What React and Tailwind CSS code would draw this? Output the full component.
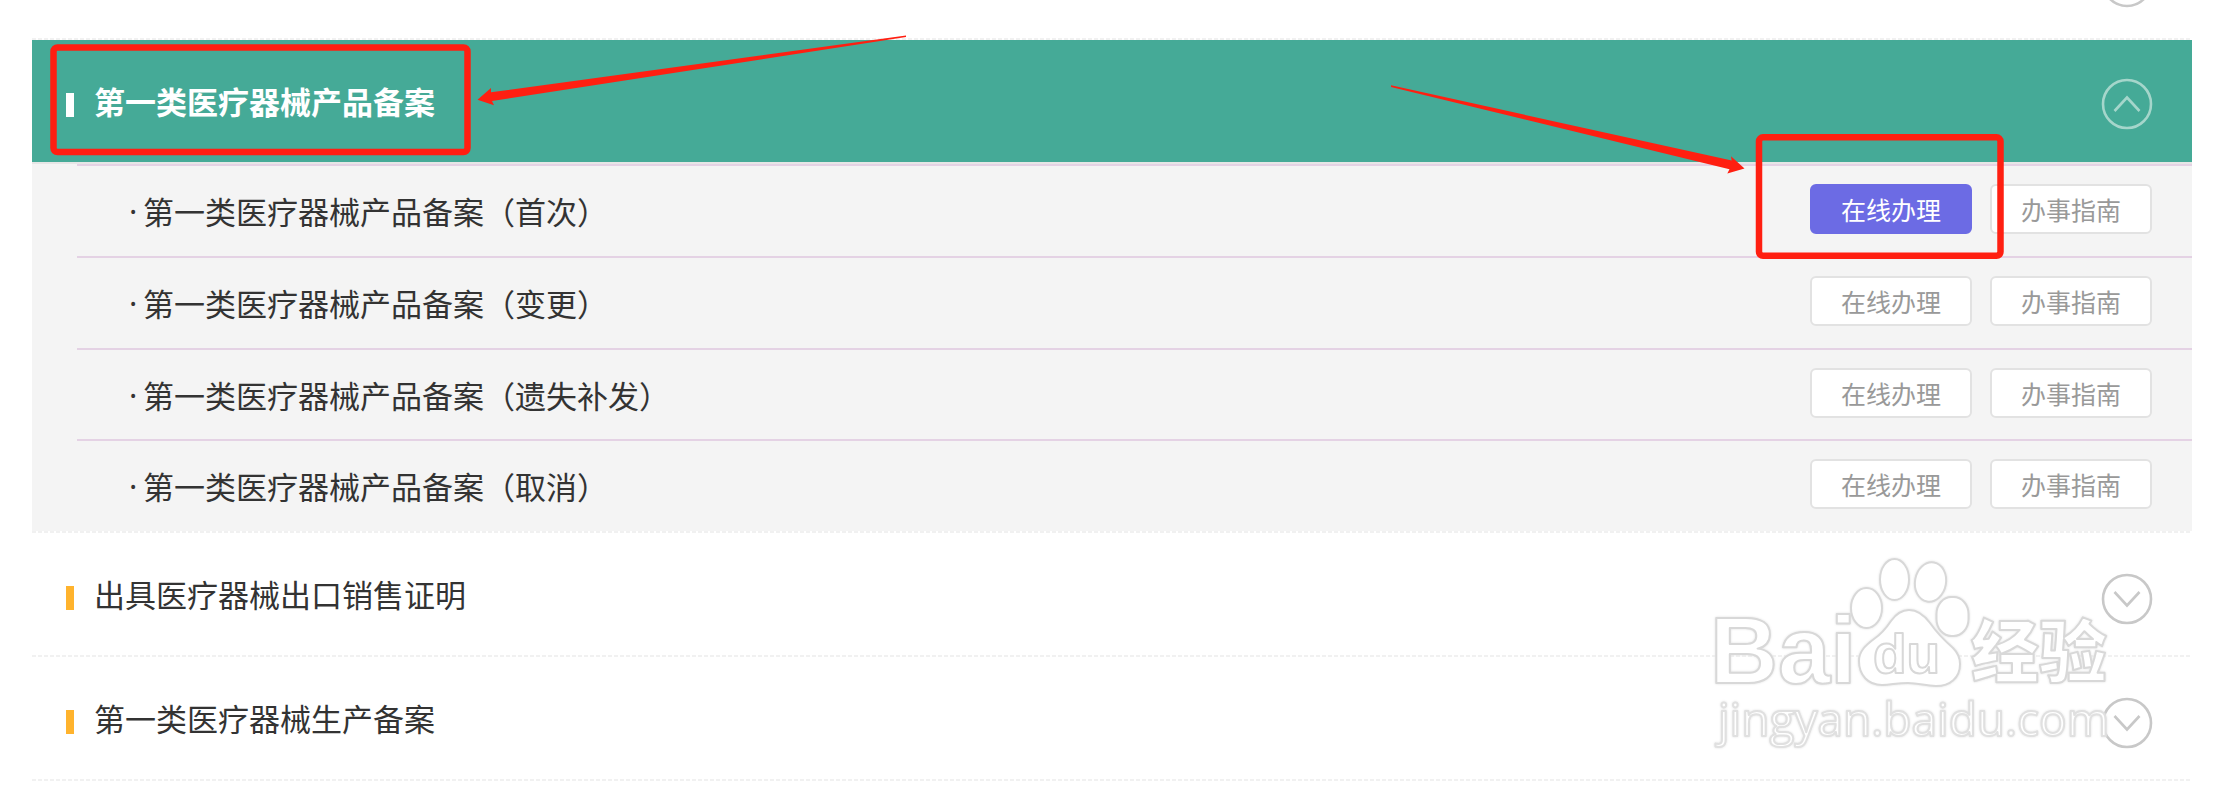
import { useState } from "react";

const fontStack = "font-['Noto_Sans_CJK_SC','Noto_Sans',sans-serif]";

const productos = [
  { id: 1, nombre: "第一类医疗器械产品备案（首次）", activo: true },
  { id: 2, nombre: "第一类医疗器械产品备案（变更）", activo: false },
  { id: 3, nombre: "第一类医疗器械产品备案（遗失补发）", activo: false },
  { id: 4, nombre: "第一类医疗器械产品备案（取消）", activo: false },
];

function DashedLine() {
  return (
    <div className="h-0.5 bg-[repeating-linear-gradient(90deg,#f1f1f1_0_4px,#ffffff_4px_6px)]" />
  );
}

function CircleArrow({ up }) {
  return (
    <svg
      viewBox="0 0 52 52"
      className={up ? "size-[52px] shrink-0 mt-1.5 text-[#a5d6cb]" : "size-[52px] shrink-0 mt-2.5 text-[#c8c8c8]"}
      fill="none"
      stroke="currentColor"
      strokeWidth="2.6"
    >
      <circle cx="26" cy="26" r="24" />
      {up ? <path d="M13.5 33 26 19.5 38.5 33" /> : <path d="M13.5 19 26 32.5 38.5 19" />}
    </svg>
  );
}

function Header({ title, open, onClick }) {
  return (
    <button
      type="button"
      onClick={onClick}
      aria-expanded={open}
      className={
        open
          ? "flex w-full h-[122px] items-center pl-[34px] pr-[39px] bg-[#45aa97] text-white font-bold cursor-pointer"
          : "flex w-full h-[122px] items-center pl-[34px] pr-[39px] text-[#333333] cursor-pointer"
      }
    >
      <span className={open ? "w-2 h-6 mt-2 bg-white" : "w-2 h-6 mt-2 bg-[#ffb32d]"} />
      <span className="ml-5 flex-1 text-left text-[31px] leading-[44px]">{title}</span>
      <CircleArrow up={open} />
    </button>
  );
}

function ActionButton({ children, primary }) {
  return (
    <button
      type="button"
      className={
        primary
          ? "w-[162px] h-[50px] rounded-md bg-[#6c6be4] text-white text-[25px] leading-[46px] border-2 border-[#6c6be4] cursor-pointer"
          : "w-[162px] h-[50px] rounded-md bg-white text-[#999999] text-[25px] leading-[46px] border-2 border-[#e2e2e2] cursor-pointer"
      }
    >
      {children}
    </button>
  );
}

// marcas rojas de la izquierda
function LeftMarks() {
  return (
    <svg
      width="900"
      height="140"
      viewBox="32 30 900 140"
      className="absolute left-0 -top-2.5 pointer-events-none"
    >
      <rect x="53.5" y="47.5" width="414" height="104.5" rx="4" fill="none" stroke="#ff1f11" strokeWidth="6.5" />
      <path
        d="M906 35.5 491 92.3 491 88 477.5 99.7 494 105.2 492 101 906 36.9Z"
        fill="#ff1f11"
      />
    </svg>
  );
}

// marcas rojas de la derecha
function RightMarks() {
  return (
    <svg
      width="812"
      height="200"
      viewBox="1380 70 812 200"
      className="absolute right-0 top-[30px] pointer-events-none"
    >
      <rect x="1759" y="137.3" width="241.5" height="118.5" rx="4" fill="none" stroke="#ff1f11" strokeWidth="6.5" />
      <path
        d="M1391 85.3 1731.7 160.5 1731 156.3 1744.5 168.5 1727.3 173.5 1729.5 169.3 1391 86.9Z"
        fill="#ff1f11"
      />
    </svg>
  );
}

function Watermark() {
  return (
    <svg
      width="440"
      height="200"
      viewBox="1700 550 440 200"
      className="absolute right-[52px] bottom-[31px] pointer-events-none drop-shadow-[0_0_1px_#e0e0e0]"
      fill="#ffffff"
      stroke="#d8d8d8"
      strokeWidth="2"
      strokeLinejoin="round"
    >
      <text x="1710" y="683" fontSize="94" className="font-['Liberation_Sans',sans-serif] font-bold">
        Bai
      </text>
      <ellipse cx="1866.5" cy="608" rx="15.5" ry="20" />
      <ellipse cx="1894.5" cy="579.5" rx="14.5" ry="20.5" />
      <ellipse cx="1930.5" cy="582" rx="15.5" ry="19.8" transform="rotate(10 1930.5 582)" />
      <rect x="1936.5" y="597" width="32" height="39" rx="15" ry="17" />
      <path d="M1909 610C1918 610 1924 615 1930 623C1937 633 1945 641 1953 648C1958 653 1960 658 1960 664C1960 678 1950 686 1936 686C1925 686 1920 683 1908 683C1896 683 1891 685 1882 685C1868 685 1859 675 1859 661C1859 651 1866 645 1874 639C1883 633 1887 627 1891 621C1896 614 1901 610 1909 610Z" />
      <text x="1873" y="673" fontSize="55" className="font-['Liberation_Sans',sans-serif] font-bold">
        du
      </text>
      <text x="1971" y="677" fontSize="68" className="font-['Noto_Sans_CJK_SC',sans-serif] font-black">
        经验
      </text>
      <text x="1718" y="736" fontSize="46" stroke="#e0e0e0" className="font-['Open_Sans',sans-serif] font-medium">
        jingyan.baidu.com
      </text>
    </svg>
  );
}

function App() {
  const [abierto, setAbierto] = useState(true);

  return (
    <div className={`bg-white pl-8 pr-[41px] ${fontStack}`}>
      {/* FINAL DE LA FILA ANTERIOR */}
      <div className="flex h-[38px] items-end overflow-hidden">
        <div className="flex w-full h-[122px] items-center justify-end pr-[39px]">
          <CircleArrow />
        </div>
      </div>
      <DashedLine />

      <div className="relative">
        <Header title="第一类医疗器械产品备案" open={abierto} onClick={() => setAbierto(!abierto)} />
        {abierto && (
          <div className="border-t-2 border-[#e6e6e6] bg-[#f4f4f4] pl-[45px]">
            <ul className="grid auto-rows-fr h-[367px]">
              {productos.map((p) => (
                <li
                  key={p.id}
                  className="flex items-start border-t-2 border-[#e4d2e4] pl-[52px] pr-10 pt-[18px]"
                >
                  <span className="w-3.5 font-['Noto_Sans',sans-serif] text-[31px] leading-[54px] text-[#333333]">·</span>
                  <span className="flex-1 text-[31px] leading-[54px] text-[#333333]">{p.nombre}</span>
                  <div className="flex gap-[18px]">
                    <ActionButton primary={p.activo}>在线办理</ActionButton>
                    <ActionButton>办事指南</ActionButton>
                  </div>
                </li>
              ))}
            </ul>
          </div>
        )}
        <LeftMarks />
        <RightMarks />
      </div>
      <DashedLine />

      <div className="relative">
        <Header title="出具医疗器械出口销售证明" open={false} />
        <DashedLine />
        <Header title="第一类医疗器械生产备案" open={false} />
        <DashedLine />
        <Watermark />
      </div>
    </div>
  );
}

export default App;
